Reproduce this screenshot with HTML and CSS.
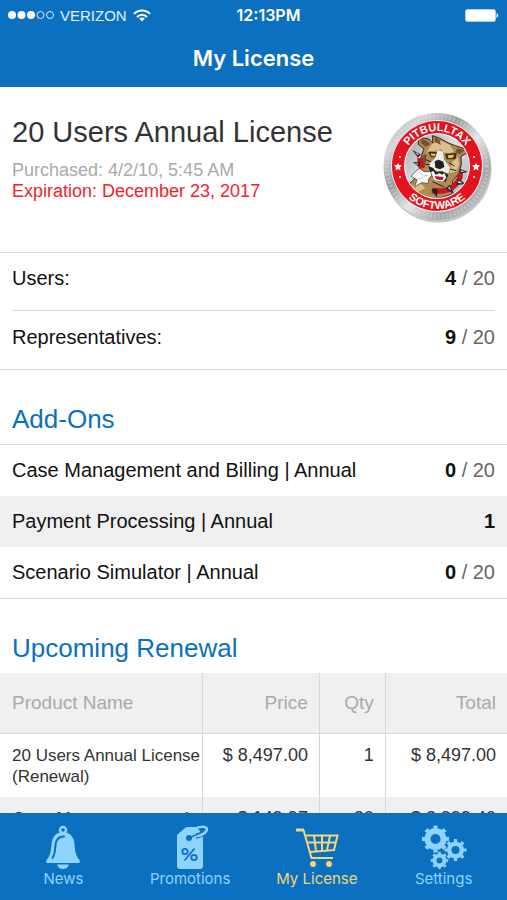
FILE: index.html
```html
<!DOCTYPE html>
<html lang="en">
<head>
    <meta charset="UTF-8">
    <meta name="viewport" content="width=device-width, initial-scale=1.0">
    <title>My License</title>
    <link rel="stylesheet" href="styles.css">
</head>
<body>

    <header class="header">
        <div class="status-bar">
            <div class="carrier">
                <svg class="signal" width="46" height="10" viewBox="0 0 46 10">
                    <g fill="#fff">
                        <circle cx="4" cy="5" r="4"/>
                        <circle cx="13.5" cy="5" r="4"/>
                        <circle cx="23" cy="5" r="4"/>
                    </g>
                    <g fill="none" stroke="#d5eaff">
                        <circle cx="32.5" cy="5" r="3.5"/>
                        <circle cx="42" cy="5" r="3.5"/>
                    </g>
                </svg>
                <span>VERIZON</span>
                <svg class="wifi" width="18" height="13" viewBox="0 0 18 13">
                    <g fill="none" stroke="#fff" stroke-width="2">
                        <path d="M1 4.9C5.4 .3 12.6 .3 17 4.9"/>
                        <path d="M4 8C6.8 5 11.2 5 14 8"/>
                    </g>
                    <path fill="#fff" d="M6.2 9.6C7.7 8.1 10.3 8.1 11.8 9.6L9 12.5Z"/>
                </svg>
            </div>
            <time class="clock">12:13PM</time>
            <div class="battery">
                <svg width="34" height="13" viewBox="0 0 34 13">
                    <rect x=".5" y=".5" width="30" height="12" rx="2" fill="#fff" stroke="#a9d3f5"/>
                    <path d="M31.500 4Q35 6.500 31.500 9Z" fill="#fff"/>
                </svg>
            </div>
        </div>
        <h1>My License</h1>
    </header>

    <main class="content">
        <section class="license">
            <div>
                <h2>20 Users Annual License</h2>
                <p class="purchased">Purchased: 4/2/10, 5:45 AM</p>
                <p class="expiration">Expiration: December 23, 2017</p>
            </div>
            <svg class="logo" width="110" height="112" viewBox="0 0 110 112" role="img" aria-label="PitBullTax Software">
                <defs>
                    <linearGradient id="metal" x1="0" y1="0" x2="1" y2="1">
                        <stop offset="0" stop-color="#a5a8aa"/>
                        <stop offset=".2" stop-color="#d4d6d7"/>
                        <stop offset=".38" stop-color="#999c9e"/>
                        <stop offset=".55" stop-color="#e4e5e6"/>
                        <stop offset=".75" stop-color="#a5a8aa"/>
                        <stop offset="1" stop-color="#d0d2d3"/>
                    </linearGradient>
                    <linearGradient id="silver" x1="0" y1="0" x2="1" y2="1">
                        <stop offset="0" stop-color="#a2a5a7"/>
                        <stop offset=".5" stop-color="#e2e3e4"/>
                        <stop offset="1" stop-color="#a8abad"/>
                    </linearGradient>
                    <clipPath id="inner"><circle cx="54" cy="54" r="32"/></clipPath>
                    <path id="arc-top" d="M19 54A35 35 0 0 1 89 54"/>
                    <path id="arc-bottom" d="M11 54A43 43 0 0 0 97 54"/>
                </defs>
                <circle cx="55" cy="57" r="53.5" fill="#c4c4c4"/>
                <circle cx="54" cy="54.5" r="53.5" fill="url(#metal)"/>
                <circle cx="54" cy="54.5" r="50" fill="none" stroke="#eee" stroke-width="4" stroke-dasharray="1 3" opacity=".5"/>
                <circle cx="54" cy="54" r="46" fill="#ececec"/>
                <circle cx="54" cy="54" r="45" fill="#e5131d"/>
                <circle cx="54" cy="54" r="33" fill="#fff"/>
                <circle cx="54" cy="54" r="32" fill="url(#silver)"/>
                <g clip-path="url(#inner)">
                    <g transform="translate(17 13) scale(.3333)">
                        <!-- body, head and ears -->
                        <path fill="#b08a55" stroke="#33251a" stroke-width="3" d="M20 185L60 145L62 120L64 92L72 72L55 58L57 37L86 42L98 54L98 32L120 40L145 54L166 62L196 72L201 84L183 94L184 118L177 145L158 168L155 208L100 225L40 205Z"/>
                        <path fill="#dcbf8b" d="M96 57L126 48L150 60L162 80L148 86L130 82L123 72L110 77L92 78L78 85ZM156 112L174 96L178 118L168 140L149 145ZM32 187L57 170L76 190L55 200Z"/>
                        <path fill="#74502d" d="M62 42L80 47L91 58L76 65L64 55ZM103 36L118 44L123 60L106 51ZM172 70L194 76L180 88L166 82ZM68 90L80 88L76 124L67 132Z"/>
                        <!-- eyes -->
                        <path fill="#3b2b1e" d="M84 80L113 82L112 96L93 97ZM135 86L170 84L166 103L140 103Z"/>
                        <path fill="#efc433" d="M92 85L108 87L104 94L94 92ZM143 91L163 89L158 99L145 99Z"/>
                        <!-- muzzle -->
                        <path fill="#eeece7" d="M113 76L129 80L132 104L150 126L146 145L119 137L86 139L87 117L105 100Z"/>
                        <path fill="#24201f" d="M104 109L116 104L130 110L133 126L120 133L106 128ZM85 122L100 130L110 142L126 139L145 149L137 170L113 168L91 151Z"/>
                        <path fill="#fff" d="M91 142L101 138L106 149L119 145L127 149L133 144L139 158L129 170L104 166Z"/>
                        <path fill="#b61b25" d="M104 153L132 156L127 166L108 163Z"/>
                        <path fill="none" stroke="#24201f" stroke-width="3" d="M76 104L93 110M78 118L90 119M147 113L163 123M151 132L168 137M97 170L133 186"/>
                        <!-- torn paper -->
                        <path fill="#fbfbf8" stroke="#302925" stroke-width="2" d="M43 142L59 130L72 140L91 139L96 151L87 160L84 176L65 173L44 185L51 164L34 154Z"/>
                        <path fill="none" stroke="#aaa" stroke-width="2" d="M57 140L71 153L85 151M52 162L69 158"/>
                        <!-- spiked collar -->
                        <path fill="none" stroke="#c8151f" stroke-width="17" d="M59 99L65 130M96 197Q144 204 165 180T178 145"/>
                        <path fill="#24232b" d="M37 75L62 88L54 98ZM39 112L61 111L57 126ZM180 132L203 140L181 147ZM174 162L198 177L170 180ZM148 180L163 207L137 191ZM112 191L111 218L94 193Z"/>
                        <path fill="#e8e8ec" d="M45 80L57 88L53 91ZM45 116L55 115L54 119ZM184 136L194 140L183 141ZM176 167L188 175L174 174ZM148 185L154 197L144 189Z"/>
                    </g>
                </g>
                <g fill="#fff">
                    <path d="M15 51l1 2 3 .4-2 2 .5 3-2.500-1.500-2.500 1.500.5-3-2-2 3-.4ZM93 51l1 2 3 .4-2 2 .5 3-2.500-1.500-2.500 1.500.5-3-2-2 3-.4Z"/>
                    <circle cx="17" cy="45" r="1"/><circle cx="17" cy="65" r="1"/>
                    <circle cx="91" cy="45" r="1"/><circle cx="91" cy="65" r="1"/>
                </g>
                <g class="logo-text">
                    <text><textPath href="#arc-top" startOffset="50%">PITBULLTAX</textPath></text>
                    <text><textPath href="#arc-bottom" startOffset="50%">SOFTWARE</textPath></text>
                </g>
            </svg>
        </section>

        <dl class="usage">
            <div class="row">
                <dt>Users:</dt>
                <dd><b>4</b> / 20</dd>
            </div>
            <div class="row">
                <dt>Representatives:</dt>
                <dd><b>9</b> / 20</dd>
            </div>
        </dl>

        <h3>Add-Ons</h3>
        <dl class="addons">
            <div class="row">
                <dt>Case Management and Billing | Annual</dt>
                <dd><b>0</b> / 20</dd>
            </div>
            <div class="row">
                <dt>Payment Processing | Annual</dt>
                <dd><b>1</b></dd>
            </div>
            <div class="row">
                <dt>Scenario Simulator | Annual</dt>
                <dd><b>0</b> / 20</dd>
            </div>
        </dl>

        <h3>Upcoming Renewal</h3>
        <table class="renewal">
            <thead>
                <tr>
                    <th>Product Name</th>
                    <th>Price</th>
                    <th>Qty</th>
                    <th>Total</th>
                </tr>
            </thead>
            <tbody>
                <tr>
                    <td>20 Users Annual License (Renewal)</td>
                    <td>$ 8,497.00</td>
                    <td>1</td>
                    <td>$ 8,497.00</td>
                </tr>
                <tr>
                    <td>Case Management and Billing | Annual</td>
                    <td>$ 149.97</td>
                    <td>20</td>
                    <td>$ 2,999.40</td>
                </tr>
            </tbody>
        </table>
    </main>

    <nav class="tabs">
        <a href="#news">
            <svg width="36" height="44" viewBox="0 0 36 44">
                <circle cx="18" cy="5" r="3" fill="none" stroke="#8fd3ff" stroke-width="2.5"/>
                <path fill="#8fd3ff" d="M18 7C25 7 29 12 29.500 19C30 27 31 31 34.500 35Q35.500 37.500 34 38H2Q.5 37.500 1.500 35C5 31 6 27 6.500 19C7 12 11 7 18 7ZM12 39.500H24Q22.500 44 18 44T12 39.500Z"/>
                <path fill="none" stroke="#0b70bf" stroke-width="2" stroke-linecap="round" d="M19 11.500C13 11.500 11 15 10.500 20C10.200 26 9.500 30 7.500 33"/>
            </svg>
            <span>News</span>
        </a>
        <a href="#promotions">
            <svg width="36" height="44" viewBox="0 0 36 44">
                <path fill="#8fd3ff" d="M6 9L13 3Q14 2 16 2H23Q25 2 26 4L30 8Q31 9 31 11V41Q31 44 28 44H8Q5 44 5 41V11Q5 10 6 9Z"/>
                <circle cx="17" cy="13" r="3" fill="#0b70bf"/>
                <path fill="none" stroke="#0b70bf" stroke-width="5" d="M24 11C28 11 34 8 34 4"/>
                <path fill="none" stroke="#8fd3ff" stroke-width="2.5" d="M21 5C26 1 35 1 35 4C35 7 30 11 24 11"/>
                <path fill="none" stroke="#0b70bf" stroke-width="1.5" d="M18 13C22 9 26 11 30 6"/>
                <g fill="none" stroke="#0b70bf" stroke-width="1.8">
                    <circle cx="13" cy="26.500" r="2.700"/><circle cx="22" cy="32.500" r="2.700"/>
                    <path d="M22.500 23.500L12.500 35.500"/>
                </g>
            </svg>
            <span>Promotions</span>
        </a>
        <a href="#license" class="active">
            <svg width="44" height="44" viewBox="0 0 44 44">
                <g fill="none" stroke="#f4d579" stroke-width="2">
                    <path stroke-width="3" d="M1 5H9"/>
                    <path d="M8.500 5L16.500 33H38"/>
                    <path d="M10.500 10.500H42.500L39 25L15 27M12 17.500H41"/>
                    <path d="M19 11L21 26M27 11V26M35 11L32 25"/>
                </g>
                <circle cx="18" cy="39" r="3" fill="#f4d579"/>
                <circle cx="34" cy="39" r="3" fill="#f4d579"/>
            </svg>
            <span>My License</span>
        </a>
        <a href="#settings">
            <svg width="46" height="44" viewBox="0 0 46 44">
                <g fill="none" stroke="#8fd3ff">
                    <circle cx="14.500" cy="14" r="8" stroke-width="6"/>
                    <circle cx="14.500" cy="14" r="12" stroke-width="3" pathLength="72" stroke-dasharray="4 5" stroke-dashoffset="2"/>
                    <circle cx="34.500" cy="25" r="6.300" stroke-width="4.500"/>
                    <circle cx="34.500" cy="25" r="9.500" stroke-width="3" pathLength="72" stroke-dasharray="4 5" stroke-dashoffset="2"/>
                    <circle cx="18.500" cy="35.500" r="5" stroke-width="4"/>
                    <circle cx="18.500" cy="35.500" r="7.500" stroke-width="2.500" pathLength="72" stroke-dasharray="4 5" stroke-dashoffset="2"/>
                </g>
            </svg>
            <span>Settings</span>
        </a>
    </nav>

</body>
</html>
```
FILE: styles.css
```css
:root {
    --blue: #0b70bf;
    --light-blue: #8fd3ff;
    --yellow: #f4d579;
    --line: #d8d8d8;
    --stripe: #f0f0f0;
}

* {
    margin: 0;
    padding: 0;
    box-sizing: border-box;
}

body {
    display: flex;
    flex-direction: column;
    height: 100vh;
    background: #fff;
    color: #111;
    font-family: "Liberation Sans", Arial, sans-serif;
}

.header {
    flex: none;
    background: var(--blue);
    color: #fff;
    padding-bottom: 13px;
}

.status-bar {
    display: grid;
    grid-template-columns: 1fr auto 1fr;
    align-items: center;
    height: 30px;
    padding: 0 8px;
    font-size: 15px;
}

.carrier {
    display: flex;
    align-items: center;
    gap: 6px;
    color: #e4f2ff;
}

.clock {
    padding-left: 30px;
    font-family: Inter, sans-serif;
    font-size: 16px;
    font-weight: 600;
}

.battery {
    display: flex;
    justify-content: flex-end;
}

h1 {
    font-family: Inter, sans-serif;
    font-size: 22px;
    font-weight: 600;
    line-height: 32px;
    margin-top: 12px;
    text-align: center;
}

.content {
    flex: 1;
    min-height: 0;
    overflow-y: auto;
    scrollbar-width: none;
}

.license {
    display: flex;
    justify-content: space-between;
    padding: 25px 14px 28px 12px;
}

.license h2 {
    font-size: 29px;
    font-weight: normal;
    line-height: 40px;
    color: #333;
    margin-bottom: 8px;
}

.license p {
    font-size: 18px;
    line-height: 21px;
}

.purchased {
    color: #aaa;
}

.expiration {
    color: #f5222d;
}

.logo {
    flex: none;
}

.logo-text {
    fill: #fff;
    font-family: "Liberation Sans Narrow", "Liberation Sans", sans-serif;
    font-size: 11px;
    font-weight: bold;
    text-anchor: middle;
}

.usage, .addons {
    border-top: 1px solid var(--line);
    border-bottom: 1px solid var(--line);
    font-size: 20px;
}

.row {
    display: flex;
    align-items: center;
    justify-content: space-between;
    height: 51px;
    padding: 0 12px;
}

.row dd {
    color: #666;
}

.row b {
    color: #111;
}

.usage .row {
    height: 58px;
    margin: 0 12px;
    padding: 0 0 6px;
}

.usage .row:first-child {
    border-bottom: 1px solid var(--line);
}

.addons .row:nth-child(even) {
    background: var(--stripe);
}

h3 {
    padding: 32px 12px 8px;
    font-size: 26px;
    font-weight: normal;
    line-height: 34px;
    color: var(--blue);
}

.renewal {
    width: 100%;
    table-layout: fixed;
    border-collapse: collapse;
    color: #333;
}

.renewal th, .renewal td {
    border-right: 1px solid var(--line);
    padding: 0 11px;
    text-align: right;
    font-size: 18px;
}

.renewal th {
    width: 23%;
    height: 60px;
    border-bottom: 1px solid var(--line);
    background: var(--stripe);
    color: #aaa;
    font-size: 19px;
    font-weight: normal;
}

.renewal th:first-child {
    width: 40%;
}

.renewal th:nth-child(3) {
    width: 13%;
}

.renewal th:last-child, .renewal td:last-child {
    width: 24%;
    border-right: none;
}

.renewal td {
    padding-top: 11px;
    padding-bottom: 10px;
    line-height: 21px;
    vertical-align: top;
}

.renewal th:first-child, .renewal td:first-child {
    padding-left: 12px;
    padding-right: 0;
    text-align: left;
}

.renewal td:first-child {
    font-size: 17px;
}

.renewal tbody tr:nth-child(even) {
    background: var(--stripe);
}

.tabs {
    flex: none;
    display: grid;
    grid-template-columns: repeat(4, 1fr);
    height: 87px;
    padding-top: 12px;
    background: var(--blue);
    font-family: Inter, sans-serif;
    font-size: 15px;
}

.tabs a {
    display: flex;
    flex-direction: column;
    align-items: center;
    color: var(--light-blue);
    text-decoration: none;
    line-height: 20px;
}

.tabs a.active {
    color: var(--yellow);
}
```
